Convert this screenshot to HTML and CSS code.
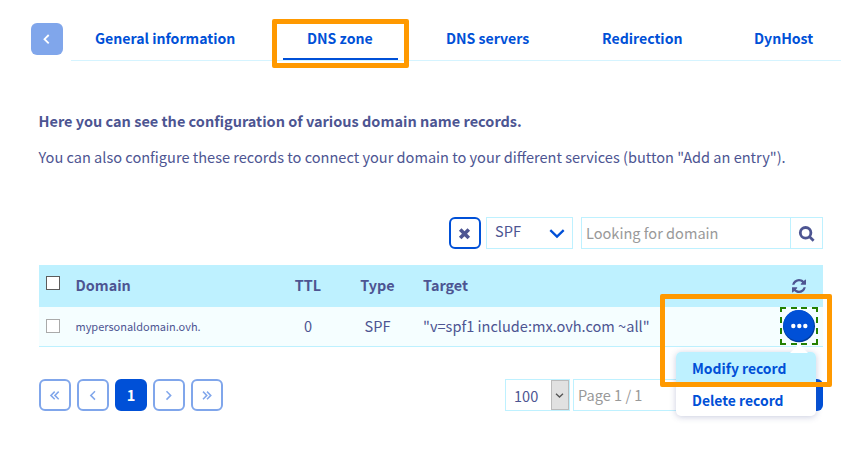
FILE: index.html
```html
<!DOCTYPE html>
<html lang="en">
<head>
<meta charset="utf-8">
<title>DNS zone</title>
<link rel="stylesheet" href="styles.css">
</head>
<body>
<header class="top">
  <button class="back" aria-label="Back"><svg width="32" height="32" viewBox="0 0 32 32"><path d="M17.7 12l-4.2 4.2 4.2 4.2"/></svg></button>
  <nav class="tabs">
    <a class="tab tab-info">General information</a>
    <a class="tab tab-zone active">DNS zone<span class="callout callout-tab"></span></a>
    <a class="tab tab-servers">DNS servers</a>
    <a class="tab tab-redirect">Redirection</a>
    <a class="tab tab-dyn">DynHost</a>
  </nav>
</header>
<main>
  <p class="lead"><span>Here you can see the configuration of various domain name records.</span></p>
  <p class="text"><span>You can also configure these records to connect your domain to your different services (button "Add an entry").</span></p>
  <div class="filters">
    <button class="clear" aria-label="Clear"><svg width="32" height="32" viewBox="0 0 32 32"><path d="M11.2 12.4l8.6 8.6M19.8 12.4l-8.6 8.6"/></svg></button>
    <div class="type"><span>SPF</span><svg width="16" height="10" viewBox="0 0 16 10"><path d="M1.3 1.2L8 7.6l6.7-6.4"/></svg></div>
    <div class="search"><span class="placeholder">Looking for domain</span><span class="go"><svg width="32" height="32" viewBox="0 0 32 32"><circle cx="14.6" cy="14.8" r="5.3"/><path d="M18.6 18.8l4 4"/></svg></span></div>
  </div>
  <div class="table">
    <div class="row head">
      <span class="check"></span><span class="domain">Domain</span><span class="ttl">TTL</span><span class="kind">Type</span><span class="target">Target</span>
      <span class="action"><svg class="refresh" width="14" height="14" viewBox="0 0 1536 1536"><path d="M1511 928q0 5-1 7-64 268-268 434.500T764 1536q-146 0-282.500-55T238 1324l-129 129q-19 19-45 19t-45-19-19-45V960q0-26 19-45t45-19h448q26 0 45 19t19 45-19 45l-137 137q71 66 161 102t187 36q134 0 250-65t186-179q11-17 53-117 8-23 30-23h192q13 0 22.500 9.500t9.500 22.500zm25-800v448q0 26-19 45t-45 19h-448q-26 0-45-19t-19-45 19-45l138-138Q969 256 768 256q-134 0-250 65T332 500q-11 17-53 117-8 23-30 23H50q-13 0-22.500-9.500T18 608v-7q65-268 270-434.500T768 0q146 0 284 55.500T1297 212l130-129q19-19 45-19t45 19 19 45z"/></svg></span>
    </div>
    <div class="row entry">
      <span class="check muted"></span><span class="domain">mypersonaldomain.ovh.</span><span class="ttl">0</span><span class="kind">SPF</span><span class="target">"v=spf1 include:mx.ovh.com ~all"</span>
      <span class="action"><svg class="focus" width="38" height="38" viewBox="0 0 38 38"><path class="dash" d="M1 5V1h5M11 1h6M21 1h6M32 1h5v4M37 10v6M37 21v6M37 32v5h-5M27 37h-6M17 37h-6M6 37H1v-5M1 27v-6M1 16v-6"/><circle class="shade" cx="19" cy="19.2" r="16"/><circle class="disc" cx="18.6" cy="18.4" r="15.3"/><circle class="dot" cx="13.3" cy="19" r="2.2"/><circle class="dot" cx="19.3" cy="19" r="2.2"/><circle class="dot" cx="25.3" cy="19" r="2.2"/></svg></span>
      <span class="callout callout-row"></span>
      <div class="menu"><svg class="tip" width="18" height="9" viewBox="0 0 18 9"><path d="M0 9l9-9 9 9z"/></svg><a class="on">Modify record</a><a>Delete record</a></div>
    </div>
  </div>
  <footer class="pager">
    <button><svg width="32" height="32" viewBox="0 0 32 32"><path d="M15.7 12.6l-3.8 3.8 3.8 3.8M19.7 12.6l-3.8 3.8 3.8 3.8"/></svg></button>
    <button><svg width="32" height="32" viewBox="0 0 32 32"><path d="M18 12.2l-4.2 4.2 4.2 4.2"/></svg></button>
    <button class="current">1</button>
    <button><svg width="32" height="32" viewBox="0 0 32 32"><path d="M13.5 12.2l4.2 4.2-4.2 4.2"/></svg></button>
    <button><svg width="32" height="32" viewBox="0 0 32 32"><path d="M12 12.6l3.8 3.8-3.8 3.8M16 12.6l3.8 3.8-3.8 3.8"/></svg></button>
    <div class="size"><span>100</span><i><svg width="18" height="30" viewBox="0 0 18 30"><path d="M5 13.7l3.5 3.3 3.5-3.3"/></svg></i></div>
    <div class="page"><span>Page 1 / 1</span></div>
    <div class="submit"></div>
  </footer>
</main>
</body>
</html>
```
FILE: styles.css
```css
* { box-sizing: border-box; }
body {
  margin: 0;
  width: 841px;
  height: 475px;
  overflow: hidden;
  background: #fff;
  color: #4d5592;
  font: 14.57px/20px "Noto Sans CJK SC", "Open Sans", sans-serif;
  white-space: nowrap;
}
svg { display: block; fill: none; }
button { padding: 0; border: 0; background: none; font: inherit; }
.top { display: flex; padding: 23px 0 0 31px; height: 61px; }
.back { width: 32px; height: 32px; border-radius: 6px; background: #80a6eb; margin-right: 8px; }
.back svg { stroke: #fff; stroke-width: 1.8; }
.tabs { display: flex; gap: 24px; width: 770px; height: 38px; border-bottom: 1px solid #d5f4ff; }
.tab { flex: none; height: 37px; padding: 5px 0 0 24px; color: #0050d7; font-size: 14.1px; font-weight: 700; position: relative; }
.tab-info { width: 188px; }
.tab-zone { width: 115px; }
.tab-servers { width: 132px; }
.tab-redirect { width: 128px; }
.tab-dyn { width: 107px; }
.active { border-bottom: 2px solid #0050d7; }
.callout { position: absolute; border: 5px solid #ff9900; border-radius: 2px; }
.callout-tab { left: -11px; top: -4px; width: 137px; height: 49px; }
.callout-row { left: 621px; top: -13px; width: 172px; height: 93px; z-index: 3; }
main { padding: 50px 18px 0 39px; }
p { margin: 0 0 0 -.5px; }
.lead { height: 36px; font-size: 14.5px; font-weight: 700; }
.text { height: 70px; }
.filters { display: flex; justify-content: flex-end; height: 48px; }
.clear { width: 32px; height: 32px; border: 2px solid #0050d7; border-radius: 6px; margin-right: 5px; }
.clear svg { margin: -2px; stroke: #4d5592; stroke-width: 3.6; }
.type { display: flex; justify-content: space-between; width: 87px; height: 32px; padding: 3px 7px 3px 8px; margin-right: 8px; border: 1px solid #bef1ff; }
.type svg { margin-top: 8px; stroke: #0050d7; stroke-width: 2.3; }
.search { display: flex; width: 242px; height: 32px; border: 1px solid #bef1ff; }
.placeholder { flex: 1; padding: 5px 4px; color: #999; }
.go { width: 32px; border-left: 1px solid #bef1ff; }
.go svg { stroke: #4d5592; stroke-width: 2.8; }
.row { display: grid; grid-template-columns: 36.5px 207.5px 50px 89px 1fr 46px; align-items: center; position: relative; }
.head { height: 42px; padding-bottom: 2px; background: #bef1ff; font-weight: 700; font-size: 14.4px; }
.entry { height: 40px; padding-bottom: 1px; background: #f5feff; border-bottom: 1px solid #bef1ff; }
.check { width: 14px; height: 14px; margin: -4px 0 0 7px; border: 1px solid #5c5c5c; background: #fff; }
.muted { margin-top: 0; border-color: #aaa; }
.entry .domain { font-size: 10.98px; }
.ttl, .kind { text-align: center; }
.target { padding-left: 1px; }
.refresh { margin: 2px 0 0 15px; fill: #4d5592; }
.focus { margin-left: 3px; position: relative; z-index: 1; }
.dash { stroke: #238000; stroke-width: 2; }
.shade { fill: #003c9e; }
.disc { fill: #0050d7; }
.dot { fill: #fff; }
.menu { position: absolute; z-index: 2; left: 637px; top: 45px; width: 140px; height: 64px; border-radius: 5px; background: #fff; box-shadow: 0 1px 6px rgba(77, 85, 146, .3); }
.menu a { display: block; height: 32px; padding: 6px 16px; color: #0050d7; font-size: 13.9px; font-weight: 700; }
.menu .on { background: #bef1ff; border-radius: 5px 5px 0 0; }
.tip { position: absolute; left: 114px; top: -8px; fill: #fff; }
.pager { display: flex; padding-top: 32px; }
.pager button { width: 32px; height: 32px; margin-right: 6px; border: 2px solid #80a6eb; border-radius: 6px; }
.pager button svg { margin: -2px; stroke: #80a6eb; stroke-width: 1.5; }
.pager .current { background: #0050d7; border-color: #0050d7; color: #fff; font-weight: 700; }
.size { display: flex; justify-content: space-between; width: 65px; height: 32px; margin-left: 276px; border: 1px solid #bef1ff; }
.size span { padding: 6px 0 0 8px; }
.size i { width: 18px; height: 30px; background: #e1e1e1; border: 1px solid #bbb; }
.size svg { margin: -1px; stroke: #555; stroke-width: 1.3; }
.page { width: 218px; height: 32px; margin-left: 3px; padding: 5px 4px; border: 1px solid #bef1ff; color: #999; }
.submit { width: 32px; height: 32px; background: #0050d7; border-radius: 0 6px 6px 0; }
```
